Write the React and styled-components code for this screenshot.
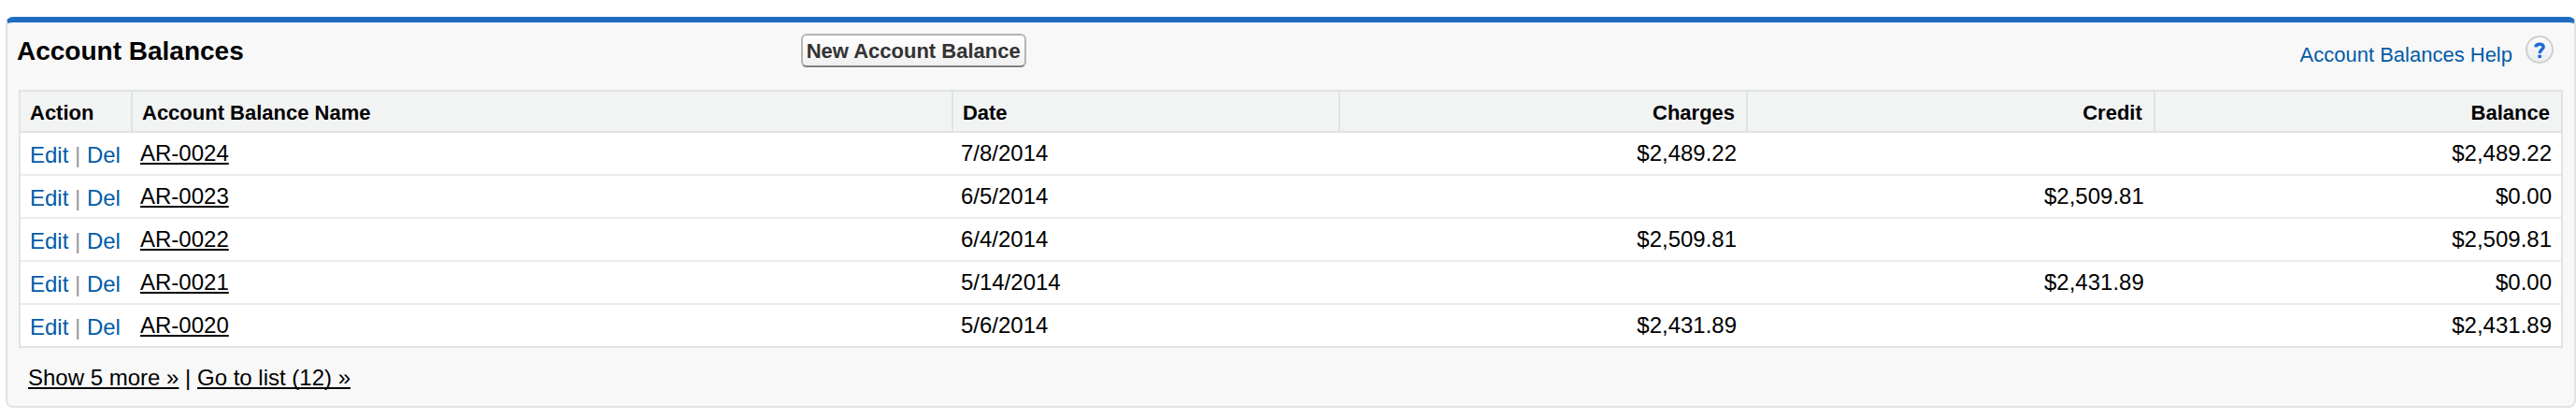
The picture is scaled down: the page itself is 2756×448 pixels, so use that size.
import React from "react";
import styled, { createGlobalStyle } from "styled-components";

const GlobalStyle = createGlobalStyle`
    * {
        box-sizing: border-box;
    }
    body {
        margin: 0;
        background: #fff;
        color: #000;
        font-family: "Liberation Sans", Arial, Helvetica, sans-serif;
        font-size: 24px;
        line-height: 28px;
    }
`;

const Page = styled.main`
    padding: 18px 0 12px 6px;
`;

const Panel = styled.section`
    padding: 0 12px 16px;
    border: 2px solid #e0e3e5;
    border-top: 6px solid #1f6dc1;
    border-radius: 8px;
    background: #f8f8f8;
`;

const PanelHeader = styled.header`
    display: grid;
    grid-template-columns: 30.9% auto 1fr;
    align-items: start;
    height: 72px;
    padding: 12px 10px 0 0;
    margin-left: -2px;
`;

const Title = styled.h2`
    margin: 0;
    font-size: 28px;
    line-height: 38px;
`;

const NewButton = styled.button`
    padding: 4px 4px 2px;
    border: 2px solid #b5b5b5;
    border-bottom-color: #7f7f7f;
    border-radius: 6px;
    background: linear-gradient(#fff, #f0f0f0);
    color: #333;
    font: bold 22px/26px "Liberation Sans", Arial, Helvetica, sans-serif;
    white-space: nowrap;
    cursor: pointer;
`;

const HelpLink = styled.a`
    display: flex;
    justify-self: end;
    gap: 14px;
    padding-top: 2px;
    color: #015ba7;
    font-size: 22px;
    line-height: 26px;
    text-decoration: none;
`;

const HelpText = styled.span`
    padding-top: 8px;
`;

const Table = styled.table`
    width: 100%;
    table-layout: fixed;
    border: 2px solid #e0e3e5;
    border-collapse: separate;
    border-spacing: 0;
    background: #fff;
`;

const Col = styled.col`
    width: ${props => props.$width};
`;

const HeadCell = styled.th`
    padding: 10px ${props => (props.$right ? "12px" : "10px")} 6px 10px;
    border-right: 2px solid #e0e3e5;
    border-bottom: 2px solid #e0e3e5;
    background: #f2f3f3;
    font-size: 22px;
    line-height: 26px;
    text-align: ${props => (props.$right ? "right" : "left")};
    white-space: nowrap;

    &:last-child {
        border-right: none;
    }
`;

const Row = styled.tr`
    &:not(:last-child) > td {
        border-bottom: 2px solid #ececec;
    }
`;

const Cell = styled.td`
    padding: 8px 12px 8px 8px;
    text-align: ${props => (props.$right ? "right" : "left")};

    &:last-child {
        padding-right: 10px;
    }
`;

const ActionCell = styled.td`
    padding: 10px 0 6px 10px;
    color: #999;
    white-space: nowrap;
`;

const ActionLink = styled.a`
    color: #015ba7;
    text-decoration: none;
`;

const TextLink = styled.a`
    color: #000;
    text-decoration: underline 2px;
    text-decoration-skip-ink: none;
    text-underline-offset: 2px;
`;

const PanelFooter = styled.footer`
    padding: 18px 10px 0;
`;

const columns = [
    { label: "Action", width: "120px" },
    { label: "Account Balance Name", width: "32.3%" },
    { label: "Date", width: "15.25%" },
    { label: "Charges", width: "16.03%", right: true },
    { label: "Credit", width: "16.03%", right: true },
    { label: "Balance", width: "auto", right: true },
];

const balances = [
    { name: "AR-0024", date: "7/8/2014", charges: "$2,489.22", credit: "", balance: "$2,489.22" },
    { name: "AR-0023", date: "6/5/2014", charges: "", credit: "$2,509.81", balance: "$0.00" },
    { name: "AR-0022", date: "6/4/2014", charges: "$2,509.81", credit: "", balance: "$2,509.81" },
    { name: "AR-0021", date: "5/14/2014", charges: "", credit: "$2,431.89", balance: "$0.00" },
    { name: "AR-0020", date: "5/6/2014", charges: "$2,431.89", credit: "", balance: "$2,431.89" },
];

const HelpIcon = () => (
    <svg width="30" height="30" viewBox="0 0 30 30" aria-hidden="true">
        <defs>
            <linearGradient id="helpFill" x1="0" y1="0" x2="0" y2="1">
                <stop offset="0" stopColor="#fdfdfd" />
                <stop offset="1" stopColor="#e9ecf1" />
            </linearGradient>
        </defs>
        <circle cx="15" cy="15" r="14" fill="url(#helpFill)" stroke="#cfcfcf" strokeWidth="2" />
        <path d="M10.9 12.4C11 10.2 12.6 9.2 15 9.2C17.6 9.2 19.2 10.2 19.2 12.2C19.2 15 15.2 15 15.2 19" fill="none" stroke="#1f6bd2" strokeWidth="3.4" />
        <rect x="13.4" y="20.6" width="3.6" height="3.4" fill="#1f6bd2" />
    </svg>
);

const App = () => (
    <Page>
        <GlobalStyle />
        <Panel>
            <PanelHeader>
                <Title>Account Balances</Title>
                <NewButton type="button">New Account Balance</NewButton>
                <HelpLink href="#help">
                    <HelpText>Account Balances Help</HelpText>
                    <HelpIcon />
                </HelpLink>
            </PanelHeader>
            <Table>
                <colgroup>
                    {columns.map(col => <Col key={col.label} $width={col.width} />)}
                </colgroup>
                <thead>
                    <tr>
                        {columns.map(col => (
                            <HeadCell key={col.label} scope="col" $right={col.right}>{col.label}</HeadCell>
                        ))}
                    </tr>
                </thead>
                <tbody>
                    {balances.map(item => (
                        <Row key={item.name}>
                            <ActionCell>
                                <ActionLink href="#edit">Edit</ActionLink> | <ActionLink href="#delete">Del</ActionLink>
                            </ActionCell>
                            <Cell><TextLink href={`#${item.name}`}>{item.name}</TextLink></Cell>
                            <Cell>{item.date}</Cell>
                            <Cell $right>{item.charges}</Cell>
                            <Cell $right>{item.credit}</Cell>
                            <Cell $right>{item.balance}</Cell>
                        </Row>
                    ))}
                </tbody>
            </Table>
            <PanelFooter>
                <TextLink href="#more">Show 5 more »</TextLink> | <TextLink href="#list">Go to list (12) »</TextLink>
            </PanelFooter>
        </Panel>
    </Page>
);

export default App;
